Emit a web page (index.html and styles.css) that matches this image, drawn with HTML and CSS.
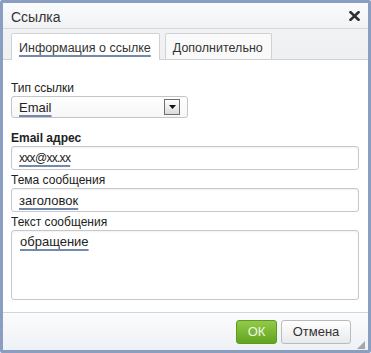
FILE: index.html
```html
<!DOCTYPE html>
<html lang="ru">
<head>
<meta charset="utf-8">
<title>Ссылка</title>
<link rel="stylesheet" href="styles.css">
</head>
<body>
<div class="dialog">
  <div class="titlebar">
    <span class="title">Ссылка</span>
    <span class="close" aria-label="Закрыть">
      <svg width="11" height="10" viewBox="0 0 11 10"><path d="M1.5 1.2 L9.5 8.8 M9.5 1.2 L1.5 8.8" stroke="#2f2f2f" stroke-width="2.6" stroke-linecap="square" fill="none"/></svg>
    </span>
  </div>
  <div class="tabs">
    <div class="tab active"><span class="mark">Информация о ссылке</span></div>
    <div class="tab">Дополнительно</div>
  </div>
  <div class="panel">
    <div class="field type">
      <div class="label">Тип ссылки</div>
      <div class="select">
        <span class="mark">Email</span>
        <span class="arrow"><svg width="7" height="4" viewBox="0 0 7 4"><path d="M0 0 H7 L3.5 4 Z" fill="#111"/></svg></span>
      </div>
    </div>
    <div class="field">
      <div class="label bold">Email адрес</div>
      <div class="input"><span class="mark narrow">xxx@xx.xx</span></div>
    </div>
    <div class="field">
      <div class="label">Тема сообщения</div>
      <div class="input"><span class="mark">заголовок</span></div>
    </div>
    <div class="field">
      <div class="label">Текст сообщения</div>
      <div class="textarea"><span class="mark">обращение</span></div>
    </div>
  </div>
  <div class="footer">
    <span class="btn ok">ОК</span>
    <span class="btn cancel">Отмена</span>
    <span class="grip"></span>
  </div>
</div>
</body>
</html>
```
FILE: styles.css
```css
html, body {
  margin: 0;
  padding: 0;
  background: #ffffff;
}
body {
  font-family: "Liberation Sans", Arial, sans-serif;
  color: #222;
}
.dialog {
  box-sizing: border-box;
  width: 371px;
  height: 353px;
  border: 3px solid #8a9ec2;
  border-radius: 2px;
  display: flex;
  flex-direction: column;
  background: #f3f4f6;
  position: relative;
}
.titlebar {
  height: 25px;
  border-bottom: 1px solid #d6d8dc;
  background: linear-gradient(#fafbfc, #f1f2f4);
  display: flex;
  align-items: center;
  justify-content: space-between;
  padding: 0 8px 0 8px;
}
.title {
  font-size: 14px;
  color: #333;
  padding-top: 2px;
}
.close {
  display: flex;
  width: 11px;
  height: 10px;
  margin-top: 1px;
}
.tabs {
  height: 26px;
  padding: 4px 0 0 8px;
  display: flex;
  gap: 5px;
  background: linear-gradient(#f1f2f4, #eef0f2);
}
.tab {
  box-sizing: border-box;
  height: 26px;
  border: 1px solid #cfd1d4;
  border-bottom: none;
  border-radius: 2px 2px 0 0;
  background: #f9f9fa;
  font-size: 12.5px;
  color: #333;
  padding: 7px 8px 0 7px;
  line-height: 14px;
  margin-bottom: -1px;
}
.tab.active {
  background: #fff;
  height: 27px;
  position: relative;
  z-index: 1;
}
.mark {
  text-decoration: underline;
  text-decoration-color: #7489ab;
  text-decoration-thickness: 2px;
  text-underline-offset: 3px;
  text-decoration-skip-ink: none;
}
.panel {
  flex: 1;
  background: #fff;
  border-top: 1px solid #cfd1d4;
  padding: 21px 9px 0 8px;
  display: flex;
  flex-direction: column;
}
.field {
  margin-bottom: 3px;
}
.field.type {
  margin-bottom: 13px;
}
.label {
  font-size: 12px;
  line-height: 14px;
  color: #222;
  margin-bottom: 1px;
}
.label.bold {
  font-weight: bold;
}
.select {
  box-sizing: border-box;
  width: 177px;
  height: 22px;
  border: 1px solid #c3c5c8;
  border-radius: 3px;
  background: linear-gradient(#ffffff, #f6f6f6);
  display: flex;
  align-items: center;
  justify-content: space-between;
  padding: 0 7px 0 7px;
  font-size: 13px;
  color: #222;
}
.select .mark {
  padding-top: 1px;
}
.arrow {
  box-sizing: border-box;
  width: 16px;
  height: 16px;
  border: 1px solid #6e6e6e;
  background: linear-gradient(#ffffff, #dcdcdc);
  display: flex;
  align-items: center;
  justify-content: center;
}
.input {
  box-sizing: border-box;
  height: 24px;
  border: 1px solid #c6c8cb;
  border-radius: 3px;
  box-shadow: inset 0 1px 2px rgba(0,0,0,0.06);
  font-size: 13px;
  color: #222;
  padding: 0 7px;
  display: flex;
  align-items: center;
}
.narrow {
  font-size: 12px;
  letter-spacing: -0.7px;
}
.textarea {
  box-sizing: border-box;
  height: 70px;
  border: 1px solid #c6c8cb;
  border-radius: 3px;
  box-shadow: inset 0 1px 2px rgba(0,0,0,0.06);
  font-size: 13px;
  line-height: 15px;
  color: #222;
  padding: 3px 8px;
}
.footer {
  height: 37px;
  border-top: 1px solid #d3d5d8;
  background: linear-gradient(#fbfcfd, #eef1f5);
  display: flex;
  align-items: center;
  justify-content: flex-end;
  gap: 4px;
  padding-right: 17px;
  position: relative;
}
.btn {
  box-sizing: border-box;
  height: 24px;
  border-radius: 3px;
  font-size: 13px;
  display: flex;
  align-items: center;
  justify-content: center;
}
.ok {
  width: 41px;
  border: 1px solid #5c9a22;
  background: linear-gradient(#93c94a, #62a51f);
  color: #eef8e2;
}
.cancel {
  width: 70px;
  border: 1px solid #b9bbbe;
  background: linear-gradient(#ffffff, #e8e9eb);
  color: #333;
}
.grip {
  position: absolute;
  right: 3px;
  bottom: 1px;
  width: 0;
  height: 0;
  border-left: 8px solid transparent;
  border-bottom: 8px solid #a3a6aa;
}
```
